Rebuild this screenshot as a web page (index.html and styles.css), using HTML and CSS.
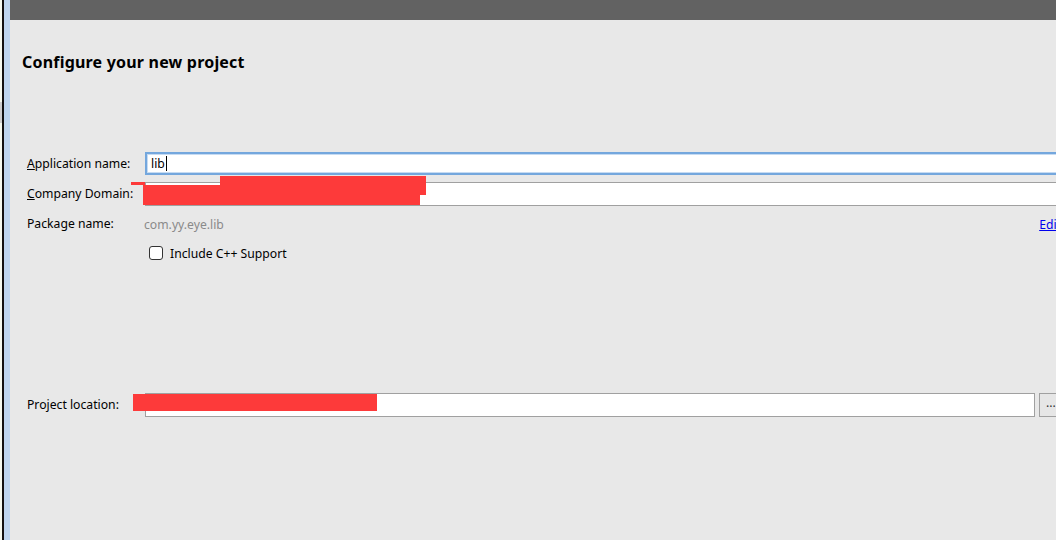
FILE: index.html
```html
<!DOCTYPE html>
<html>
<head>
<meta charset="utf-8">
<link rel="stylesheet" href="styles.css">
</head>
<body>
<div class="window">
  <div class="edge">
    <div class="edge-white"><div class="edge-notch"></div></div>
    <div class="edge-black"></div>
    <div class="edge-blue"></div>
  </div>
  <div class="panel">
    <div class="topbar"></div>
    <div class="content">
      <h1 class="title">Configure your new project</h1>
      <div class="form">
        <div class="row row-app">
          <label class="label"><u>A</u>pplication name:</label>
          <div class="field field-focus">lib<span class="caret"></span></div>
        </div>
        <div class="row row-company">
          <label class="label"><u>C</u>ompany Domain:</label>
          <div class="field"></div>
          <div class="redact r1"></div>
          <div class="redact r2"></div>
          <div class="redact r3"></div>
          <div class="redact r4"></div>
        </div>
        <div class="row row-package">
          <span class="label">Package name:</span>
          <span class="pkg">com.yy.eye.lib</span>
          <a class="edit" href="#">Edit</a>
        </div>
        <div class="row row-check">
          <span class="label"></span>
          <span class="checkbox"></span>
          <span class="check-text">Include C++ Support</span>
        </div>
        <div class="row row-location">
          <span class="label">Project location:</span>
          <div class="field field-loc"></div>
          <div class="browse">...</div>
          <div class="redact r5"></div>
        </div>
      </div>
    </div>
  </div>
</div>
</body>
</html>
```

FILE: styles.css
```css
html, body {
  margin: 0;
  padding: 0;
  width: 1056px;
  height: 540px;
  overflow: hidden;
  background: #e8e8e8;
}

.window {
  display: flex;
  height: 540px;
  font-family: "Noto Sans", "Liberation Sans", sans-serif;
  font-size: 12.2px;
  color: #000;
}

.edge {
  display: flex;
  flex: 0 0 10px;
}
.edge-white {
  width: 2px;
  background: #f4f8ee;
  position: relative;
}
.edge-notch {
  position: absolute;
  left: 0;
  top: 102px;
  width: 2px;
  height: 21px;
  background: #cfcfcf;
}
.edge-black {
  width: 2px;
  background: #111;
}
.edge-blue {
  width: 6px;
  background: #bdd5ee;
}

.panel {
  flex: 0 0 1070px;
  display: flex;
  flex-direction: column;
  background: #e8e8e8;
}

.topbar {
  height: 20px;
  background: #626262;
}

.content {
  padding: 0 0 0 12px;
}

.title {
  margin: 31px 0 0 0;
  font-size: 16px;
  font-weight: 700;
  line-height: 22px;
  letter-spacing: 0.2px;
}

.form {
  margin-top: 78px;
  padding-left: 5px;
  display: flex;
  flex-direction: column;
}

.row {
  display: flex;
  align-items: center;
  position: relative;
}

.label {
  flex: 0 0 118px;
  line-height: 16px;
}
.label u {
  text-decoration: underline;
}

.field {
  flex: 1;
  height: 22px;
  background: #fff;
  border: 1px solid #a0a0a0;
  box-sizing: content-box;
  line-height: 22px;
  padding-left: 5px;
}

.field-focus {
  height: 19px;
  border: 2px solid #74a7dd;
  box-shadow: inset 0 0 0 1px #c6dbf2;
  line-height: 19px;
  padding-left: 4px;
  display: flex;
  align-items: center;
}

.caret {
  display: inline-block;
  width: 1px;
  height: 15px;
  background: #000;
  margin-left: 1px;
}

.row-app {
  height: 25px;
}

.row-company {
  margin-top: 6px;
  height: 24px;
}

.row-package {
  margin-top: 6px;
  height: 24px;
}

.pkg {
  flex: 1;
  color: #8a8a8a;
  margin-left: -1px;
}

.edit {
  color: #0000ee;
  text-decoration: underline;
  margin-right: 5px;
  position: relative;
  left: -14px;
}

.row-check {
  margin-top: 6px;
  height: 22px;
}

.checkbox {
  width: 12px;
  height: 12px;
  border: 1px solid #333;
  border-radius: 3px;
  background: #fff;
  margin-left: 4px;
}

.check-text {
  margin-left: 7px;
}

.row-location {
  margin-top: 128px;
  height: 25px;
}

.field-loc {
  flex: 0 0 883px;
}

.browse {
  margin-left: 4px;
  flex: 1;
  height: 22px;
  border: 1px solid #a0a0a0;
  background: #e6e6e6;
  line-height: 18px;
  padding-left: 6px;
  color: #333;
}

.redact {
  position: absolute;
  background: #fd3a3a;
}
.r1 { left: 104px; top: 0px; width: 14px; height: 3px; }
.r2 { left: 193px; top: -6px; width: 206px; height: 19px; }
.r3 { left: 116px; top: 3px; width: 110px; height: 10px; }
.r4 { left: 116px; top: 13px; width: 277px; height: 10px; }
.r5 { left: 106px; top: 2px; width: 244px; height: 17px; }
```
